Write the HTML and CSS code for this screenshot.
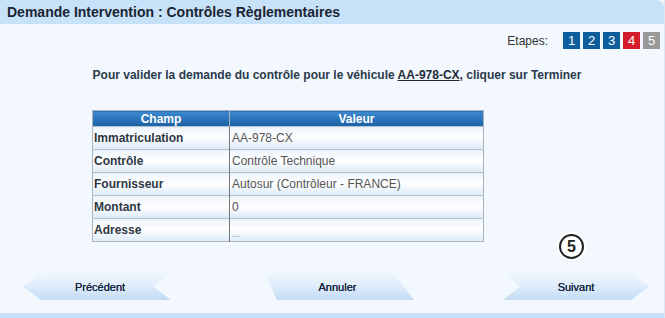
FILE: index.html
```html
<!DOCTYPE html>
<html lang="fr">

<head>
    <meta charset="UTF-8">
    <meta name="viewport" content="width=device-width, initial-scale=1.0">
    <title>Demande Intervention</title>
    <link rel="stylesheet" href="styles.css">
</head>

<body>
    <div class="page">
        <div class="title-bar">Demande Intervention : Contrôles Règlementaires</div>

        <div class="steps">
            <span class="steps-label">Etapes:</span>
            <span class="step done">1</span>
            <span class="step done">2</span>
            <span class="step done">3</span>
            <span class="step current">4</span>
            <span class="step todo">5</span>
        </div>

        <p class="message">
            Pour valider la demande du contrôle pour le véhicule <u>AA-978-CX</u>, cliquer sur Terminer
        </p>

        <table class="recap">
            <thead>
                <tr>
                    <th class="col-champ">Champ</th>
                    <th>Valeur</th>
                </tr>
            </thead>
            <tbody>
                <tr>
                    <td class="label">Immatriculation</td>
                    <td>AA-978-CX</td>
                </tr>
                <tr>
                    <td class="label">Contrôle</td>
                    <td>Contrôle Technique</td>
                </tr>
                <tr>
                    <td class="label">Fournisseur</td>
                    <td>Autosur (Contrôleur - FRANCE)</td>
                </tr>
                <tr>
                    <td class="label">Montant</td>
                    <td>0</td>
                </tr>
                <tr>
                    <td class="label">Adresse</td>
                    <td class="dots">...</td>
                </tr>
            </tbody>
        </table>

        <div class="marker-row">
            <span class="marker">5</span>
        </div>

        <div class="nav">
            <button class="nav-btn prev">Précédent</button>
            <button class="nav-btn cancel">Annuler</button>
            <button class="nav-btn next">Suivant</button>
        </div>

        <div class="bottom-bar"></div>
    </div>
</body>

</html>
```

FILE: styles.css
```css
* {
    margin: 0;
    padding: 0;
    box-sizing: border-box;
    font-family: "Liberation Sans", Arial, sans-serif;
}

body {
    background-color: #f2f8fe;
    width: 665px;
    height: 318px;
    overflow: hidden;
}

.page {
    height: 318px;
    display: flex;
    flex-direction: column;
    border-right: 1px solid #dbe8f4;
}

.title-bar {
    height: 24px;
    line-height: 25px;
    padding-left: 7px;
    font-size: 14px;
    font-weight: bold;
    color: #1b2533;
    background-color: #c7e1f8;
    border-top-right-radius: 8px;
}

.steps {
    display: flex;
    justify-content: flex-end;
    align-items: center;
    gap: 3px;
    margin-top: 8px;
    padding-right: 4px;
    height: 17px;
}

.steps-label {
    font-size: 12px;
    color: #333;
    margin-right: 12px;
}

.step {
    width: 17px;
    height: 17px;
    line-height: 17px;
    text-align: center;
    font-size: 13px;
    color: #fff;
}

.step.done {
    background-color: #0e5e9e;
}

.step.current {
    background-color: #d41b2c;
}

.step.todo {
    background-color: #999;
}

.message {
    margin-top: 19px;
    text-align: center;
    font-size: 12px;
    font-weight: bold;
    color: #2b3a4c;
    padding-left: 10px;
}

.message u {
    color: #1e2a38;
}

.recap {
    margin: 28px 0 0 92px;
    width: 392px;
    border-collapse: collapse;
    font-size: 12px;
    border: 1px solid #a9b3bd;
}

.recap th {
    height: 16px;
    font-size: 12px;
    color: #fff;
    background: linear-gradient(#3d8ad0, #1a5fa4);
    border-left: 1px solid #a9b3bd;
    text-align: center;
}

.recap th.col-champ {
    width: 137px;
}

.recap td {
    height: 23px;
    padding: 0 2px;
    color: #555;
    background: linear-gradient(#eef5fc, #ffffff 45%, #dceaf7);
    border-top: 1px solid #b9c3cc;
    border-left: 1px solid #777;
}

.recap td.label {
    font-weight: bold;
    color: #2d3744;
    border-left: none;
    padding-left: 1px;
}

.recap td.dots {
    vertical-align: bottom;
    padding-bottom: 2px;
    font-size: 10px;
    color: #888;
}

.marker-row {
    display: flex;
    justify-content: flex-end;
    padding-right: 80px;
    margin-top: -8px;
}

.marker {
    width: 25px;
    height: 25px;
    border: 2px solid #222;
    border-radius: 50%;
    line-height: 21px;
    text-align: center;
    font-size: 16px;
    font-weight: bold;
    color: #222;
    background-color: #fff;
    box-shadow: 0 0 0 2px #fff;
}

.nav {
    display: flex;
    align-items: center;
    margin-top: 14px;
    height: 27px;
}

.nav-btn {
    height: 27px;
    border: none;
    font-size: 11px;
    color: #13243a;
    text-shadow: 0 0 0.4px #13243a;
    background: linear-gradient(#f0f7fe, #dceafa 55%, #c2dcf5);
    cursor: pointer;
}

.nav-btn.prev {
    width: 148px;
    margin-left: 23px;
    padding-left: 6px;
    clip-path: polygon(0 50%, 12% 0, 100% 0, 88% 50%, 100% 100%, 12% 100%);
}

.nav-btn.cancel {
    width: 149px;
    margin-left: 94px;
    padding-right: 4px;
    clip-path: polygon(0 0, 86% 0, 100% 100%, 8% 100%);
}

.nav-btn.next {
    width: 146px;
    margin-left: 89px;
    clip-path: polygon(0 0, 88% 0, 100% 50%, 88% 100%, 0 100%, 12% 50%);
}

.bottom-bar {
    margin-top: auto;
    height: 5px;
    background-color: #c7e1f8;
}
```
